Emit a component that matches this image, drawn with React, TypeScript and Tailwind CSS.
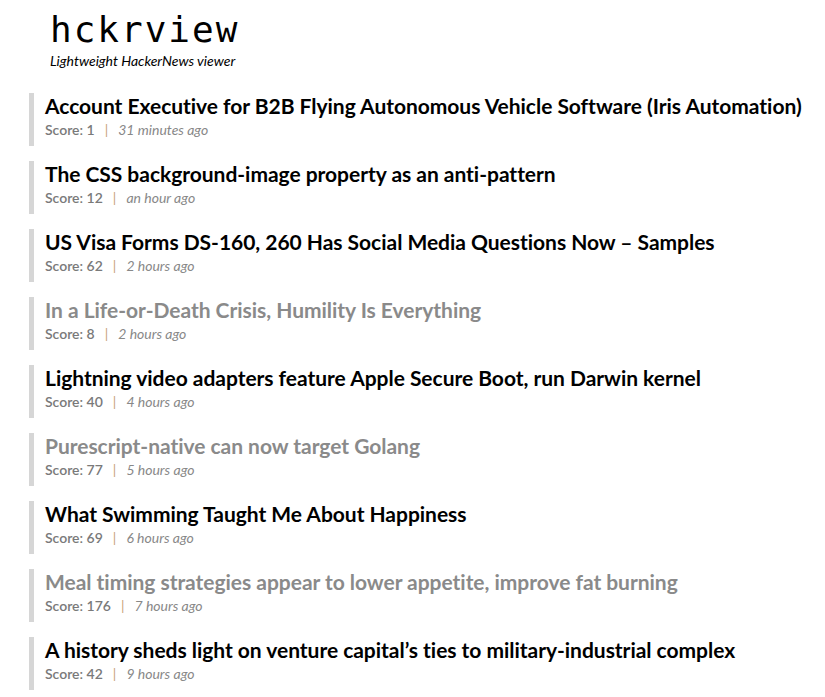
const stories = [
  { title: 'Account Executive for B2B Flying Autonomous Vehicle Software (Iris Automation)', score: 1, time: '31 minutes ago', visited: false },
  { title: 'The CSS background-image property as an anti-pattern', score: 12, time: 'an hour ago', visited: false },
  { title: 'US Visa Forms DS-160, 260 Has Social Media Questions Now – Samples', score: 62, time: '2 hours ago', visited: false },
  { title: 'In a Life-or-Death Crisis, Humility Is Everything', score: 8, time: '2 hours ago', visited: true },
  { title: 'Lightning video adapters feature Apple Secure Boot, run Darwin kernel', score: 40, time: '4 hours ago', visited: false },
  { title: 'Purescript-native can now target Golang', score: 77, time: '5 hours ago', visited: true },
  { title: 'What Swimming Taught Me About Happiness', score: 69, time: '6 hours ago', visited: false },
  { title: 'Meal timing strategies appear to lower appetite, improve fat burning', score: 176, time: '7 hours ago', visited: true },
  { title: 'A history sheds light on venture capital’s ties to military-industrial complex', score: 42, time: '9 hours ago', visited: false },
];

export default function App() {
  return (
    <div className="min-h-screen bg-white font-['Lato',sans-serif]">
      {/* Header */}
      <header className="pl-[50px] pt-[8px]">
        <h1 className="font-['DejaVu_Sans_Mono',monospace] text-[36px] leading-[44px] font-light tracking-[2px] text-black">
          hckrview
        </h1>
        <p className="text-[14px] italic text-black leading-[16px] mt-[1px]">Lightweight HackerNews viewer</p>
      </header>

      {/* Stories */}
      <div className="pl-[29px] pt-[24px] flex flex-col gap-[15px]">
        {stories.map((s) => (
          <div key={s.title} className="border-l-[5px] border-[#d6d6d6] pl-[11px] h-[53px]">
            <a
              href="#"
              className={`block text-[21px] font-bold leading-[26px] tracking-[-0.03px] ${s.visited ? 'text-[#8a8a8a]' : 'text-black'}`}
            >
              {s.title}
            </a>
            <div className="flex items-center text-[14px] leading-[18px] mt-[2px]">
              <span className="text-[#7a7a7a] font-semibold">Score: {s.score}</span>
              <span className="text-[#c9a27a] mx-[10px]">|</span>
              <span className="text-[#888] italic">{s.time}</span>
            </div>
          </div>
        ))}
      </div>
    </div>
  );
}
